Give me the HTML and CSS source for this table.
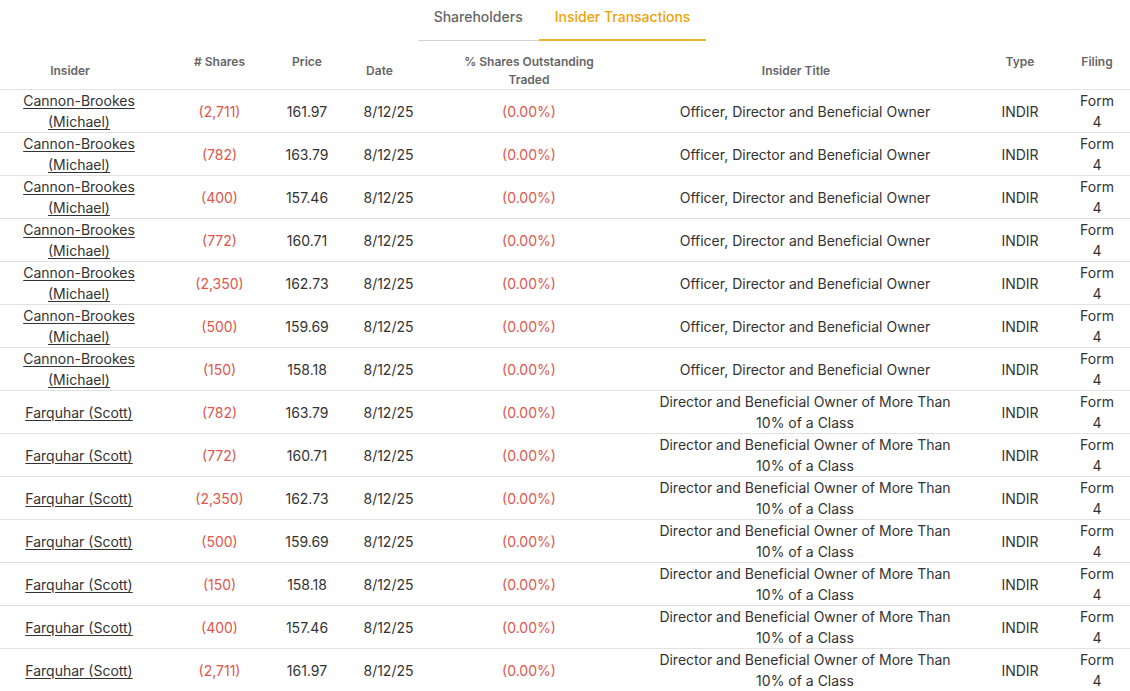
FILE: index.html
```html
<!DOCTYPE html>
<html lang="en">
<head>
<meta charset="utf-8">
<title>Insider Transactions</title>
<link rel="stylesheet" href="styles.css">
</head>
<body>
<nav class="tabs">
  <a class="tab">Shareholders</a>
  <a class="tab tab-active">Insider Transactions</a>
</nav>
<table class="tx">
  <colgroup>
    <col class="w-insider"><col class="w-shares"><col class="w-price"><col class="w-date"><col class="w-pct"><col class="w-title"><col class="w-type"><col class="w-filing">
  </colgroup>
  <thead>
    <tr>
      <th class="h-insider mid">Insider</th>
      <th class="h-shares">#&nbsp;Shares</th>
      <th class="h-price">Price</th>
      <th class="h-date mid">Date</th>
      <th class="h-pct">% Shares Outstanding Traded</th>
      <th class="h-title mid">Insider Title</th>
      <th class="h-type">Type</th>
      <th class="h-filing">Filing</th>
    </tr>
  </thead>
  <tbody>
    <tr><td class="c-insider"><a href="#">Cannon-Brookes (Michael)</a></td><td class="c-shares neg">(2,711)</td><td class="c-price">161.97</td><td class="c-date">8/12/25</td><td class="c-pct neg">(0.00%)</td><td class="c-title">Officer, Director and Beneficial Owner</td><td class="c-type">INDIR</td><td class="c-filing">Form 4</td></tr>
    <tr><td class="c-insider"><a href="#">Cannon-Brookes (Michael)</a></td><td class="c-shares neg">(782)</td><td class="c-price">163.79</td><td class="c-date">8/12/25</td><td class="c-pct neg">(0.00%)</td><td class="c-title">Officer, Director and Beneficial Owner</td><td class="c-type">INDIR</td><td class="c-filing">Form 4</td></tr>
    <tr><td class="c-insider"><a href="#">Cannon-Brookes (Michael)</a></td><td class="c-shares neg">(400)</td><td class="c-price">157.46</td><td class="c-date">8/12/25</td><td class="c-pct neg">(0.00%)</td><td class="c-title">Officer, Director and Beneficial Owner</td><td class="c-type">INDIR</td><td class="c-filing">Form 4</td></tr>
    <tr><td class="c-insider"><a href="#">Cannon-Brookes (Michael)</a></td><td class="c-shares neg">(772)</td><td class="c-price">160.71</td><td class="c-date">8/12/25</td><td class="c-pct neg">(0.00%)</td><td class="c-title">Officer, Director and Beneficial Owner</td><td class="c-type">INDIR</td><td class="c-filing">Form 4</td></tr>
    <tr><td class="c-insider"><a href="#">Cannon-Brookes (Michael)</a></td><td class="c-shares neg">(2,350)</td><td class="c-price">162.73</td><td class="c-date">8/12/25</td><td class="c-pct neg">(0.00%)</td><td class="c-title">Officer, Director and Beneficial Owner</td><td class="c-type">INDIR</td><td class="c-filing">Form 4</td></tr>
    <tr><td class="c-insider"><a href="#">Cannon-Brookes (Michael)</a></td><td class="c-shares neg">(500)</td><td class="c-price">159.69</td><td class="c-date">8/12/25</td><td class="c-pct neg">(0.00%)</td><td class="c-title">Officer, Director and Beneficial Owner</td><td class="c-type">INDIR</td><td class="c-filing">Form 4</td></tr>
    <tr><td class="c-insider"><a href="#">Cannon-Brookes (Michael)</a></td><td class="c-shares neg">(150)</td><td class="c-price">158.18</td><td class="c-date">8/12/25</td><td class="c-pct neg">(0.00%)</td><td class="c-title">Officer, Director and Beneficial Owner</td><td class="c-type">INDIR</td><td class="c-filing">Form 4</td></tr>
    <tr><td class="c-insider"><a href="#">Farquhar (Scott)</a></td><td class="c-shares neg">(782)</td><td class="c-price">163.79</td><td class="c-date">8/12/25</td><td class="c-pct neg">(0.00%)</td><td class="c-title">Director and Beneficial Owner of More Than 10% of a Class</td><td class="c-type">INDIR</td><td class="c-filing">Form 4</td></tr>
    <tr><td class="c-insider"><a href="#">Farquhar (Scott)</a></td><td class="c-shares neg">(772)</td><td class="c-price">160.71</td><td class="c-date">8/12/25</td><td class="c-pct neg">(0.00%)</td><td class="c-title">Director and Beneficial Owner of More Than 10% of a Class</td><td class="c-type">INDIR</td><td class="c-filing">Form 4</td></tr>
    <tr><td class="c-insider"><a href="#">Farquhar (Scott)</a></td><td class="c-shares neg">(2,350)</td><td class="c-price">162.73</td><td class="c-date">8/12/25</td><td class="c-pct neg">(0.00%)</td><td class="c-title">Director and Beneficial Owner of More Than 10% of a Class</td><td class="c-type">INDIR</td><td class="c-filing">Form 4</td></tr>
    <tr><td class="c-insider"><a href="#">Farquhar (Scott)</a></td><td class="c-shares neg">(500)</td><td class="c-price">159.69</td><td class="c-date">8/12/25</td><td class="c-pct neg">(0.00%)</td><td class="c-title">Director and Beneficial Owner of More Than 10% of a Class</td><td class="c-type">INDIR</td><td class="c-filing">Form 4</td></tr>
    <tr><td class="c-insider"><a href="#">Farquhar (Scott)</a></td><td class="c-shares neg">(150)</td><td class="c-price">158.18</td><td class="c-date">8/12/25</td><td class="c-pct neg">(0.00%)</td><td class="c-title">Director and Beneficial Owner of More Than 10% of a Class</td><td class="c-type">INDIR</td><td class="c-filing">Form 4</td></tr>
    <tr><td class="c-insider"><a href="#">Farquhar (Scott)</a></td><td class="c-shares neg">(400)</td><td class="c-price">157.46</td><td class="c-date">8/12/25</td><td class="c-pct neg">(0.00%)</td><td class="c-title">Director and Beneficial Owner of More Than 10% of a Class</td><td class="c-type">INDIR</td><td class="c-filing">Form 4</td></tr>
    <tr><td class="c-insider"><a href="#">Farquhar (Scott)</a></td><td class="c-shares neg">(2,711)</td><td class="c-price">161.97</td><td class="c-date">8/12/25</td><td class="c-pct neg">(0.00%)</td><td class="c-title">Director and Beneficial Owner of More Than 10% of a Class</td><td class="c-type">INDIR</td><td class="c-filing">Form 4</td></tr>
  </tbody>
</table>
</body>
</html>
```
FILE: styles.css
```css
html, body {
  margin: 0;
  padding: 0;
  background: #ffffff;
}
body {
  font-family: Inter, "Liberation Sans", sans-serif;
  color: #333333;
  font-size: 14px;
}

/* Tabs */
.tabs {
  display: flex;
  justify-content: center;
  padding-right: 6px;
  margin-bottom: 8px;
}
.tab {
  display: block;
  padding: 7px 16px 13px;
  line-height: 20px;
  font-size: 14px;
  font-weight: 500;
  color: #666666;
  border-bottom: 1px solid #d4d4d4;
}
.tab-active {
  color: #f0a30a;
  border-bottom: 2px solid #f0b429;
  padding-bottom: 12px;
}

/* Table */
.tx {
  width: 1130px;
  table-layout: fixed;
  border-collapse: collapse;
}
.w-insider { width: 158px; }
.w-shares { width: 123px; }
.w-price { width: 52px; }
.w-date { width: 101px; }
.w-pct { width: 190px; }
.w-title { width: 352px; }
.w-type { width: 88px; }
.w-filing { width: 66px; }

.tx th {
  font-size: 12px;
  font-weight: 600;
  color: #666666;
  line-height: 18px;
  text-align: center;
  vertical-align: top;
  padding: 4px 10px 0;
  border-bottom: 1px solid #e2e2e2;
}
.tx th.mid { vertical-align: middle; }
.tx th.h-insider { padding-left: 4px; padding-right: 22px; }
.tx th.h-price { padding-left: 0; padding-right: 0; }
.tx th.h-date { padding-left: 4px; padding-right: 12px; }
.tx th.h-pct { padding-left: 16px; padding-right: 16px; }
.tx th.h-title { padding-left: 15px; padding-right: 23px; }

.tx td {
  text-align: center;
  vertical-align: middle;
  line-height: 21px;
  padding: 0 10px;
  height: 42px;
  border-bottom: 1px solid #e2e2e2;
  color: #333333;
}
.tx td a {
  color: #333333;
  text-decoration: underline;
  text-underline-offset: 2px;
  text-decoration-thickness: 1px;
}
.tx td.c-price { padding-left: 0; padding-right: 0; }
.tx td.c-date { padding-left: 14px; padding-right: 4px; }
.tx td.c-pct { padding-left: 16px; padding-right: 16px; }
.tx td.c-title { padding-left: 25px; padding-right: 15px; }
.tx td.c-filing { padding-left: 12px; padding-right: 12px; }
.tx td.neg { color: #e0564c; }
```
